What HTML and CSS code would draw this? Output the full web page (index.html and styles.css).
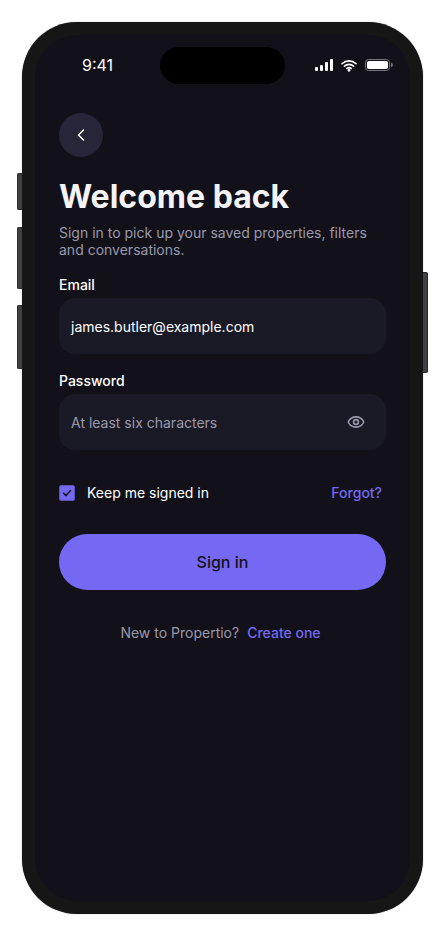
FILE: index.html
```html
<!DOCTYPE html>
<html lang="en">
<head>
  <meta charset="UTF-8">
  <meta name="viewport" content="width=device-width, initial-scale=1.0">
  <title>Sign in</title>
  <link rel="stylesheet" href="styles.css">
</head>
<body>
  <div class="phone">
    <div class="side-btn mute"></div>
    <div class="side-btn vol-up"></div>
    <div class="side-btn vol-down"></div>
    <div class="side-btn power"></div>

    <div class="screen">
      <div class="island"></div>

      <div class="status-bar">
        <span class="time">9:41</span>
        <div class="status-icons">
          <svg class="signal" width="18" height="12" viewBox="0 0 18 12" fill="#fff">
            <rect x="0" y="8" width="3" height="4" rx="1"/>
            <rect x="5" y="6" width="3" height="6" rx="1"/>
            <rect x="10" y="3" width="3" height="9" rx="1"/>
            <rect x="15" y="0" width="3" height="12" rx="1"/>
          </svg>
          <svg class="wifi" width="16" height="13" viewBox="0 0 17 13" fill="none" stroke="#fff" stroke-width="1.7" stroke-linecap="round">
            <path d="M1 4.6C5.2 0.6 11.8 0.6 16 4.6"/>
            <path d="M3.6 7.2C6.4 4.7 10.6 4.7 13.4 7.2"/>
            <path d="M6.2 9.6C7.6 8.6 9.4 8.6 10.8 9.6"/>
            <circle cx="8.5" cy="11.6" r="0.7" fill="#fff"/>
          </svg>
          <svg class="battery" width="28" height="12" viewBox="0 0 28 12" fill="none">
            <rect x="0.5" y="0.5" width="24" height="11" rx="3" stroke="#77777f"/>
            <rect x="2" y="2" width="21" height="8" rx="1.8" fill="#fff"/>
            <path d="M26 3.8c1.1.3 1.9 1.1 1.9 2.2s-.8 1.9-1.9 2.2z" fill="#77777f"/>
          </svg>
        </div>
      </div>

      <div class="content">
        <button class="back-btn" aria-label="Back">
          <svg width="14" height="14" viewBox="0 0 14 14" fill="none" stroke="#fff" stroke-width="1.5" stroke-linecap="round" stroke-linejoin="round">
            <path d="M9.5 2L4.5 7L9.5 12"/>
          </svg>
        </button>

        <h1>Welcome back</h1>
        <p class="subtitle">Sign in to pick up your saved properties, filters and conversations.</p>

        <div class="form-group">
          <label>Email</label>
          <div class="field">james.butler@example.com</div>
        </div>

        <div class="form-group">
          <label>Password</label>
          <div class="field placeholder">
            <span>At least six characters</span>
            <svg class="eye" width="18" height="18" viewBox="0 0 18 18" fill="none" stroke="#9a99ab" stroke-width="1.6" stroke-linecap="round" stroke-linejoin="round">
              <path d="M1.2 9C2.8 5.7 5.6 3.9 9 3.9S15.2 5.7 16.8 9C15.2 12.3 12.4 14.1 9 14.1S2.8 12.3 1.2 9Z"/>
              <circle cx="9" cy="9" r="2.4"/>
            </svg>
          </div>
        </div>

        <div class="options">
          <div class="remember">
            <span class="checkbox">
              <svg width="12" height="12" viewBox="0 0 12 12" fill="none" stroke="#12111a" stroke-width="1.5" stroke-linecap="round" stroke-linejoin="round">
                <path d="M2.5 6.2L5 8.6L9.5 3.6"/>
              </svg>
            </span>
            <span>Keep me signed in</span>
          </div>
          <a class="link">Forgot?</a>
        </div>

        <button class="primary-btn">Sign in</button>

        <div class="signup">
          <span>New to Propertio?</span>
          <a class="link">Create one</a>
        </div>
      </div>
    </div>
  </div>
</body>
</html>
```

FILE: styles.css
```css
* {
  box-sizing: border-box;
}

body {
  margin: 0;
  background: #fff;
  font-family: Inter, "Liberation Sans", sans-serif;
}

.phone {
  position: relative;
  width: 401px;
  height: 892px;
  margin: 22px;
  padding: 13px;
  background: #161616;
  border-radius: 55px;
  box-shadow: 0 0 1px rgba(0, 0, 0, 0.6);
}

.side-btn {
  position: absolute;
  width: 5px;
  background: #404044;
  border: 1px solid #2a2a2c;
}

.mute {
  left: -5px;
  top: 151px;
  height: 37px;
  border-right: none;
  border-radius: 2px 0 0 2px;
}

.vol-up {
  left: -5px;
  top: 205px;
  height: 62px;
  border-right: none;
  border-radius: 2px 0 0 2px;
}

.vol-down {
  left: -5px;
  top: 283px;
  height: 64px;
  border-right: none;
  border-radius: 2px 0 0 2px;
}

.power {
  right: -5px;
  top: 250px;
  height: 101px;
  border-left: none;
  border-radius: 0 2px 2px 0;
}

.screen {
  position: relative;
  height: 100%;
  background: #12111a;
  border-radius: 42px;
  overflow: hidden;
}

.island {
  position: absolute;
  top: 12px;
  left: 125px;
  width: 125px;
  height: 37px;
  background: #000;
  border-radius: 19px;
}

.status-bar {
  display: flex;
  justify-content: space-between;
  align-items: center;
  height: 60px;
  padding: 0 17px 0 47px;
}

.time {
  color: #fff;
  font-size: 16px;
  font-weight: 400;
}

.status-icons {
  display: flex;
  align-items: center;
  gap: 8px;
}

.content {
  padding: 18px 24px 0;
}

.back-btn {
  display: flex;
  align-items: center;
  justify-content: center;
  width: 44px;
  height: 44px;
  padding: 0;
  border: none;
  border-radius: 50%;
  background: #272639;
}

h1 {
  margin: 21px 0 0;
  color: #f4f4f8;
  font-size: 32px;
  line-height: 38px;
  font-weight: 700;
}

.subtitle {
  margin: 8px 0 0;
  color: #9a99ab;
  font-size: 14px;
  line-height: 17px;
}

.form-group {
  margin-top: 17px;
}

.form-group label {
  display: block;
  margin-bottom: 3px;
  color: #fff;
  font-size: 14px;
  line-height: 20px;
  font-weight: 500;
}

.form-group + .form-group {
  margin-top: 17px;
}

.field {
  display: flex;
  align-items: center;
  justify-content: space-between;
  height: 56px;
  padding: 0 12px;
  background: #1a1a27;
  border-radius: 16px;
  color: #fff;
  font-size: 14px;
}

.field.placeholder {
  color: #9a99ab;
}

.eye {
  margin-right: 9px;
}

.options {
  display: flex;
  align-items: center;
  justify-content: space-between;
  margin-top: 33px;
  padding-right: 4px;
}

.remember {
  display: flex;
  align-items: center;
  gap: 12px;
  color: #fff;
  font-size: 14px;
  line-height: 20px;
}

.checkbox {
  display: flex;
  align-items: center;
  justify-content: center;
  width: 16px;
  height: 16px;
  background: #7569f4;
  border: 1px solid #5a50c0;
  border-radius: 2px;
}

.link {
  color: #7569f4;
  font-size: 14px;
  line-height: 20px;
  font-weight: 500;
}

.primary-btn {
  display: block;
  width: 100%;
  height: 56px;
  margin-top: 31px;
  border: none;
  border-radius: 28px;
  background: #7569f4;
  color: #12111a;
  font-family: inherit;
  font-size: 16px;
  font-weight: 500;
}

.signup {
  display: flex;
  justify-content: center;
  gap: 8px;
  margin-top: 33px;
  padding-right: 4px;
  color: #9a99ab;
  font-size: 14px;
  line-height: 20px;
}
```
